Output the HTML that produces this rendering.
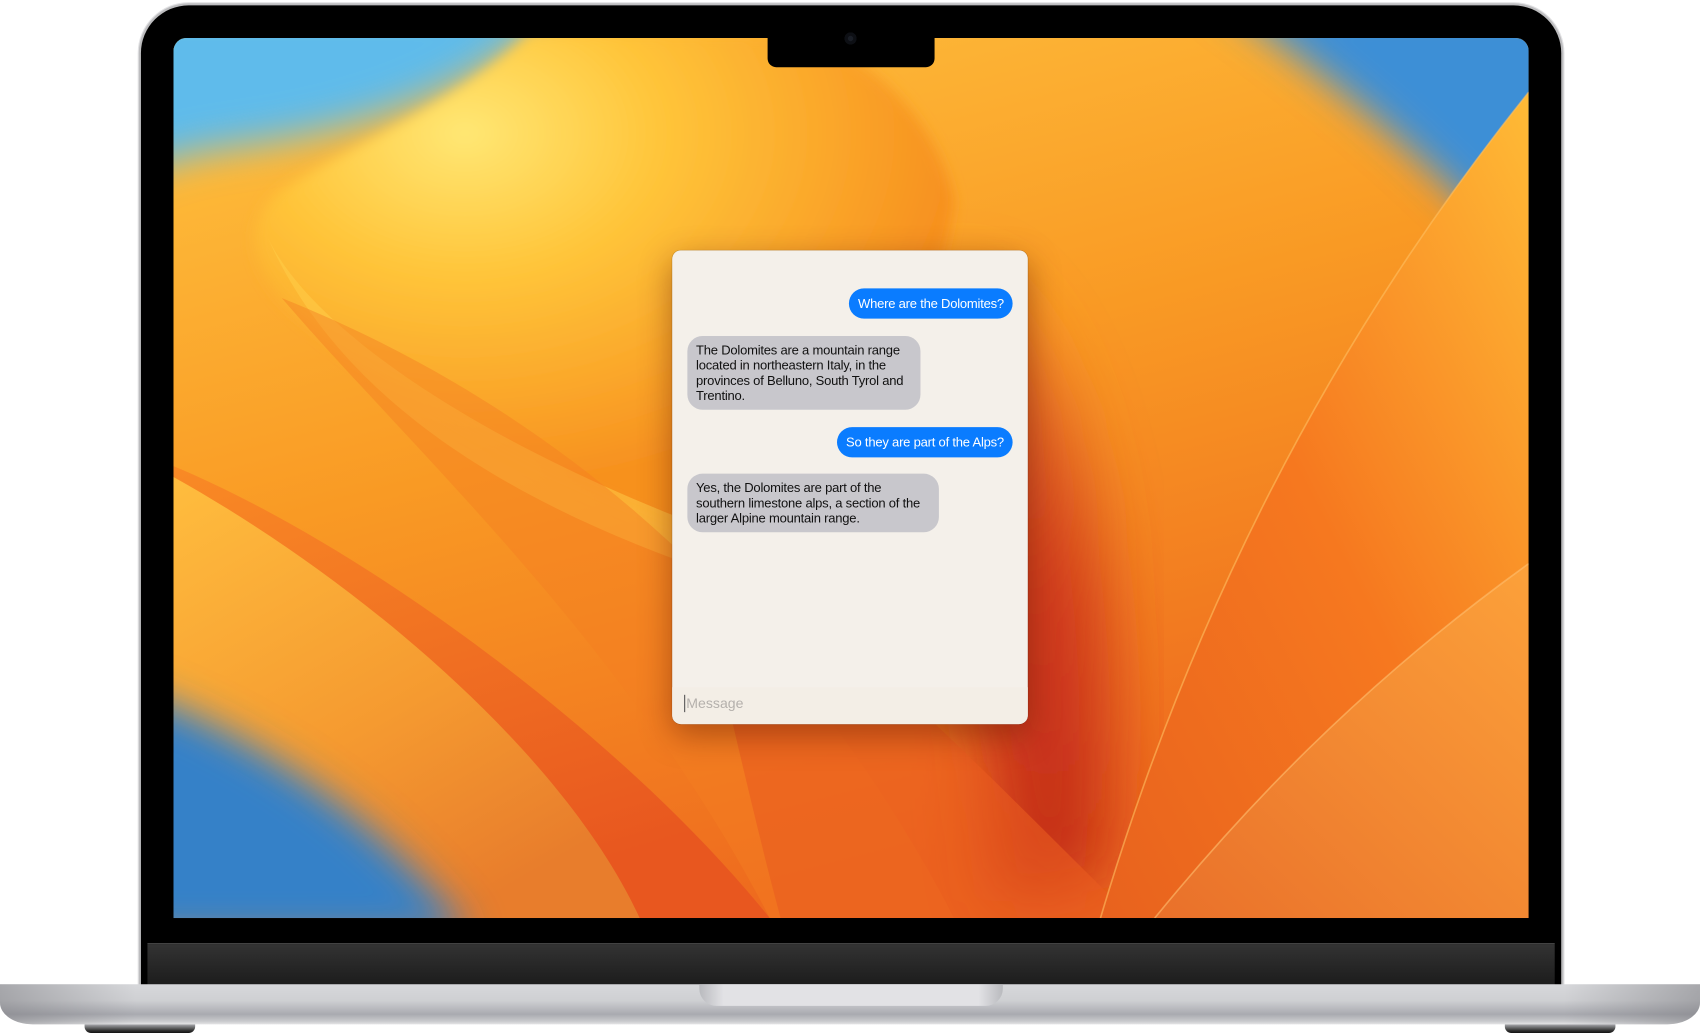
<!DOCTYPE html>
<html><head><meta charset="utf-8">
<style>
html,body{margin:0;padding:0;background:#fff;width:1700px;height:1033px;overflow:hidden}
#w{position:absolute;left:0;top:0;width:1568px;height:953px;transform:scale(1.08418,1.08395);transform-origin:0 0;font-family:"Liberation Sans",sans-serif}
.lid{position:absolute;left:130px;top:5px;width:1310px;height:910px;border-radius:44px 44px 0 0;background:#000;box-shadow:0 0 0 2px #bdbdbf,0 0 0 3px #e2e2e4}
.screen{position:absolute;left:160px;top:35px;width:1250px;height:812px;border-radius:12px 12px 0 0;overflow:hidden}
.notch{position:absolute;left:708px;top:30px;width:154px;height:32px;background:#000;border-radius:0 0 8px 8px}
.cam{position:absolute;left:779px;top:30px;width:11px;height:11px;border-radius:50%;background:#1a1e26;box-shadow:inset 0 0 0 3px #0d0f14}
.chin{position:absolute;left:136px;top:870px;width:1298px;height:38px;background:linear-gradient(#333,#1c1c1c);border-top:1px solid #444}
.base{position:absolute;left:0;top:908px;width:1568px;height:37px;border-radius:0 0 30px 30px / 0 0 20px 20px;background:linear-gradient(#d7d8db 0%,#cfd0d3 40%,#a9aab0 75%,#c8c9cc 92%,#e4e4e6 100%)}
.base:before{content:"";position:absolute;inset:0;border-radius:inherit;background:linear-gradient(90deg,rgba(120,120,125,.5),rgba(255,255,255,0) 8%,rgba(255,255,255,0) 92%,rgba(120,120,125,.5))}
.hinge{position:absolute;left:645px;top:908px;width:280px;height:20px;border-radius:0 0 16px 16px;background:linear-gradient(90deg,#b9babe,#e2e2e5 8%,#e2e2e5 92%,#b9babe)}
.foot{position:absolute;top:945px;width:102px;height:8px;background:linear-gradient(#a8a9ad,#333 70%,#111);border-radius:0 0 6px 6px}
.win{position:absolute;left:620px;top:231px;width:328px;height:437px;background:#f4f0ea;border-radius:8px;box-shadow:0 10px 30px rgba(90,20,0,.45),0 0 0 .5px rgba(0,0,0,.2)}
.b{position:absolute;font-size:12px;line-height:14px;padding:0 8px;box-sizing:border-box;letter-spacing:-.2px}
.blue{background:#0a7cff;color:#fff;border-radius:14px;height:28px;line-height:28px;right:14px}
.gray{background:#c8c7cc;color:#111;border-radius:14px;left:14px;padding:6px 8px}
.msg{position:absolute;left:11px;top:410px;font-size:13px;color:#b4b0ac;border-left:1px solid #555;padding-left:1px;line-height:16px}
.inp{position:absolute;left:0;right:0;bottom:0;height:34px;background:#f3eee6;border-radius:0 0 8px 8px}
</style></head><body>
<div id="w">
<div class="lid"></div>
<div class="screen">
<svg width="1250" height="812" viewBox="0 0 1250 812">
<defs>
<filter id="bl" x="-20%" y="-20%" width="140%" height="140%"><feGaussianBlur stdDeviation="18"/></filter>
<filter id="bl3" x="-30%" y="-30%" width="160%" height="160%"><feGaussianBlur stdDeviation="30"/></filter>
<filter id="bl2"><feGaussianBlur stdDeviation="6"/></filter>
<linearGradient id="bg" x1="0" y1="0" x2="0.4" y2="1"><stop offset="0" stop-color="#ffc440"/><stop offset=".5" stop-color="#f99a24"/><stop offset="1" stop-color="#ee6a1e"/></linearGradient>
<radialGradient id="yel" cx=".3" cy=".2" r=".7"><stop offset="0" stop-color="#ffe774"/><stop offset=".4" stop-color="#ffc53a"/><stop offset="1" stop-color="#f7911f"/></radialGradient>
<linearGradient id="pA" x1="0" y1="0" x2=".6" y2="1"><stop offset="0" stop-color="#ffbd3e"/><stop offset=".6" stop-color="#f59a30"/><stop offset="1" stop-color="#e87d2c"/></linearGradient>
<linearGradient id="pB" x1="0" y1="0" x2=".4" y2="1"><stop offset="0" stop-color="#f98a25"/><stop offset="1" stop-color="#e8571f"/></linearGradient>
<linearGradient id="pR" x1="1" y1="0" x2="0" y2="1"><stop offset="0" stop-color="#ffbb36"/><stop offset=".5" stop-color="#f6781f"/><stop offset="1" stop-color="#e8621e"/></linearGradient>
<linearGradient id="pR2" x1="1" y1="0" x2="0" y2="1"><stop offset="0" stop-color="#fca13a"/><stop offset="1" stop-color="#e9702a"/></linearGradient>
<linearGradient id="red" x1="0" y1="0" x2="0" y2="1"><stop offset="0" stop-color="#e8782c"/><stop offset=".5" stop-color="#d03a1c"/><stop offset="1" stop-color="#c22c18"/></linearGradient>
</defs>
<rect width="1250" height="812" fill="url(#bg)"/>
<path d="M-40,-40 L360,-40 C300,40 200,80 60,100 C20,105 -20,115 -40,130 Z" fill="#5fbbeb" filter="url(#bl)"/>
<path d="M960,-40 L1290,-40 L1290,260 C1200,150 1100,60 960,-40 Z" fill="#3d8fd6" filter="url(#bl)"/>
<path d="M720,220 C830,260 880,480 860,780 L760,800 C740,600 720,420 700,260 Z" fill="url(#red)" filter="url(#bl3)"/>
<path d="M330,-5 C260,60 160,100 100,140 C60,170 70,220 120,260 C250,370 420,430 480,460 C600,420 700,300 720,150 C700,60 620,0 560,-5 Z" fill="url(#yel)" filter="url(#bl2)"/>
<path d="M85,180 C120,260 260,360 460,440 L460,480 C300,420 150,330 85,180 Z" fill="#ffd04a" opacity=".5"/>
<path d="M0,395 C180,470 420,650 550,812 L0,812 Z" fill="url(#pB)"/>
<path d="M100,240 C220,380 420,560 550,812 L720,812 C600,580 400,360 100,240 Z" fill="#f47e22" opacity=".45"/>
<path d="M0,405 C170,500 360,660 430,812 L0,812 Z" fill="url(#pA)"/>
<path d="M-40,600 C90,650 200,730 275,830 L-40,830 Z" fill="#3581c8" filter="url(#bl)"/>
<path d="M470,440 C640,560 760,690 885,812 L560,812 C530,700 500,560 470,440 Z" fill="#ea5b1f" opacity=".6"/>
<path d="M1250,50 C1050,300 930,560 855,812 L1250,812 Z" fill="url(#pR)"/>
<path d="M1250,485 C1090,600 980,720 905,812 L1250,812 Z" fill="url(#pR2)"/>
<path d="M1250,485 C1090,600 980,720 905,812" fill="none" stroke="#ffc070" stroke-width="1.5" opacity=".6"/>
<path d="M1250,50 C1050,300 930,560 855,812" fill="none" stroke="#ffc060" stroke-width="1.5" opacity=".6"/>
</svg>
</div>
<div class="notch"></div>
<div class="cam"></div>
<div class="chin"></div>
<div class="base"></div>
<div class="hinge"></div>
<div class="foot" style="left:78px"></div>
<div class="foot" style="left:1388px"></div>

<div class="win">
  <div class="b blue" style="top:35px">Where are the Dolomites?</div>
  <div class="b gray" style="top:79px;width:215px">The Dolomites are a mountain range located in northeastern Italy, in the provinces of Belluno, South Tyrol and Trentino.</div>
  <div class="b blue" style="top:163px">So they are part of the Alps?</div>
  <div class="b gray" style="top:206px;width:232px">Yes, the Dolomites are part of the southern limestone alps, a section of the larger Alpine mountain range.</div>
  <div class="inp"></div>
  <div class="msg">Message</div>
</div>
</div>
</body></html>
